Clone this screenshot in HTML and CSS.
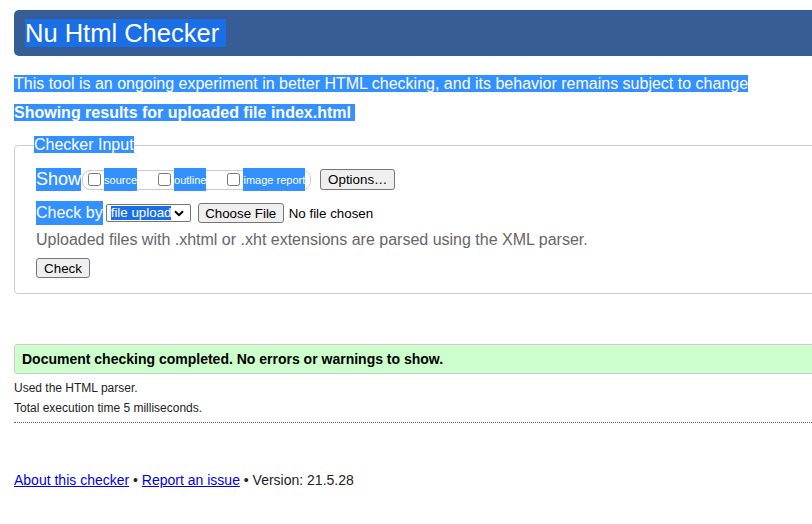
FILE: index.html
```html
<!DOCTYPE html>
<html lang="en">
<head>
<meta charset="utf-8">
<title>Nu Html Checker</title>
<link rel="stylesheet" href="styles.css">
</head>
<body>
<div class="page">
  <h1 class="banner"><span class="title-sel">Nu Html Checker&nbsp;</span></h1>
  <p class="intro"><span class="sel">This tool is an ongoing experiment in better HTML checking, and its behavior remains subject to change</span></p>
  <p class="showing"><span class="sel">Showing results for uploaded file index.html&nbsp;</span></p>

  <fieldset class="checker">
    <legend class="legend"><span class="sel">Checker Input</span></legend>
    <div class="row row-show">
      <span class="sel row-label">Show</span>
      <span class="group">
        <input type="checkbox" class="cb"><span class="sel small">source</span><span class="gap"></span>
        <input type="checkbox" class="cb"><span class="sel small">outline</span><span class="gap"></span>
        <input type="checkbox" class="cb"><span class="sel small">image report</span>
      </span>
      <button class="btn btn-options" type="button">Options…</button>
    </div>
    <div class="row row-check">
      <span class="sel row-label">Check by</span>
      <span class="select"><span class="select-sel">file upload</span><svg class="chev" width="10" height="7" viewBox="0 0 10 7"><path d="M1 1.2 L5 5.2 L9 1.2" fill="none" stroke="#000" stroke-width="2"/></svg></span>
      <button class="btn btn-file" type="button">Choose File</button>
      <span class="nofile">No file chosen</span>
    </div>
    <p class="help">Uploaded files with .xhtml or .xht extensions are parsed using the XML parser.</p>
    <div class="row-submit"><button class="btn btn-check" type="button">Check</button></div>
  </fieldset>

  <div class="success">Document checking completed. No errors or warnings to show.</div>
  <p class="stat stat-first">Used the HTML parser.</p>
  <p class="stat">Total execution time 5 milliseconds.</p>
  <div class="rule"></div>

  <p class="footer"><a href="#">About this checker</a> • <a href="#">Report an issue</a> • Version: 21.5.28</p>
</div>
</body>
</html>
```
FILE: styles.css
```css
html, body {
  margin: 0;
  padding: 0;
  overflow: hidden;
  background: #fff;
}
body {
  font-family: "Liberation Sans", Arial, sans-serif;
  color: #000;
}
.page {
  padding: 10px 0 0 14px;
  width: 820px;
}
.banner {
  margin: 0;
  height: 46px;
  background: #365d95;
  border-radius: 5px 0 0 5px;
  padding-left: 11px;
  display: flex;
  align-items: center;
  font-weight: normal;
  font-size: 25.5px;
  color: #fff;
}
.title-sel {
  background: #1a6fe6;
  line-height: 28px;
  display: inline-block;
  height: 28px;
}
.sel {
  background: #3390ff;
  color: #fff;
}
.intro {
  margin: 19px 0 0;
  font-size: 16px;
  line-height: 18px;
}
.showing {
  margin: 11px 0 0;
  font-size: 16px;
  font-weight: bold;
  line-height: 18px;
}
.checker {
  margin: 14px 0 0;
  border: 1px solid #ccc;
  border-radius: 4px;
  padding: 0 0 15px 21px;
}
.legend {
  padding: 0;
  margin-left: -2px;
  font-size: 16px;
  line-height: 18px;
}
.row {
  display: flex;
  align-items: center;
}
.row-show {
  margin-top: 14px;
  height: 23px;
}
.row-label {
  font-size: 18px;
  display: inline-block;
  height: 23px;
  line-height: 23px;
  flex: none;
}
.group {
  display: flex;
  align-items: center;
  height: 20px;
  box-sizing: border-box;
  border: 1px solid #ccc;
  border-radius: 8px;
  margin-left: 1px;
  padding: 0 5px 0 0;
  flex: none;
}
.cb {
  width: 13px;
  height: 13px;
  margin: 0 3px 0 5px;
  flex: none;
}
.small {
  font-size: 11px;
  display: inline-block;
  height: 23px;
  line-height: 24px;
  flex: none;
}
.gap {
  width: 16px;
  flex: none;
}
.btn {
  font-family: "Liberation Sans", Arial, sans-serif;
  font-size: 13.333px;
  background: #efefef;
  border: 1px solid #767676;
  border-radius: 3px;
  padding: 0 6px;
  color: #000;
  box-sizing: border-box;
  flex: none;
}
.btn-options {
  margin-left: 9px;
  height: 21px;
  width: 75px;
}
.row-check {
  margin-top: 10px;
  height: 24px;
}
.row-check .row-label {
  height: 24px;
  line-height: 24px;
  font-size: 16px;
}
.select {
  margin-left: 3px;
  width: 85px;
  height: 18px;
  box-sizing: border-box;
  border: 1px solid #767676;
  border-radius: 2px;
  display: flex;
  align-items: center;
  padding-left: 4px;
  flex: none;
}
.select-sel {
  display: inline-block;
  font-size: 13.333px;
  background: #1a6fe6;
  color: #fff;
  line-height: 14px;
  white-space: nowrap;
  flex: none;
}
.chev {
  margin-left: 3px;
  flex: none;
}
.btn-file {
  margin-left: 7px;
  height: 20px;
  width: 86px;
}
.nofile {
  margin-left: 5px;
  font-size: 13.333px;
  flex: none;
}
.help {
  margin: 6px 0 0;
  font-size: 16px;
  line-height: 18px;
  color: #666;
}
.row-submit {
  margin-top: 9px;
}
.btn-check {
  height: 20px;
  width: 54px;
}
.success {
  margin-top: 50px;
  height: 30px;
  box-sizing: border-box;
  background: #ccffcc;
  border: 1px solid #ccc;
  border-radius: 3px;
  padding-left: 7px;
  font-size: 14px;
  font-weight: bold;
  line-height: 28px;
}
.stat {
  margin: 0;
  font-size: 12px;
  line-height: 20px;
  color: #222;
}
.stat-first {
  margin-top: 4px;
}
.rule {
  margin-top: 4px;
  border-top: 1px dotted #666;
}
.footer {
  margin: 49px 0 0;
  font-size: 14px;
  line-height: 16px;
  color: #222;
}
.footer a {
  color: #00e;
}
```
